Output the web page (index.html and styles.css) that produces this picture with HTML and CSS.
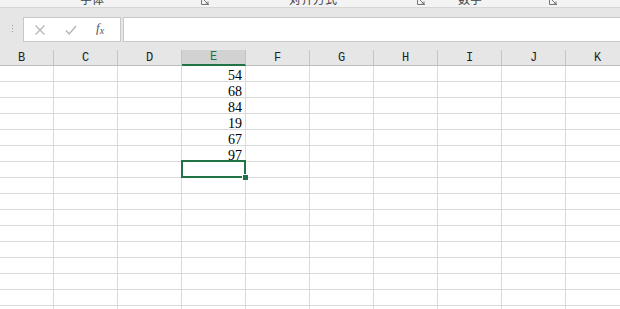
FILE: index.html
```html
<!DOCTYPE html>
<html lang="zh-CN">
<head>
  <meta charset="UTF-8" />
  <title>Sheet</title>
  <link rel="stylesheet" href="styles.css">
</head>
<body>
  <div class="ribbon">
    <div class="group group-font">
      <span class="group-label">字体</span>
      <svg class="launcher" width="8" height="8" viewBox="0 0 8 8"><path d="M0.5 0v7.5h7.5M3 3l4 4M4.5 7H7V4.5" fill="none" stroke="#777" stroke-width="1"/></svg>
    </div>
    <div class="group group-align">
      <span class="group-label">对齐方式</span>
      <svg class="launcher" width="8" height="8" viewBox="0 0 8 8"><path d="M0.5 0v7.5h7.5M3 3l4 4M4.5 7H7V4.5" fill="none" stroke="#777" stroke-width="1"/></svg>
    </div>
    <div class="group group-number">
      <span class="group-label">数字</span>
      <svg class="launcher" width="8" height="8" viewBox="0 0 8 8"><path d="M0.5 0v7.5h7.5M3 3l4 4M4.5 7H7V4.5" fill="none" stroke="#777" stroke-width="1"/></svg>
    </div>
  </div>

  <div class="formula-bar">
    <div class="grip"><i></i><i></i><i></i></div>
    <div class="fx-buttons">
      <svg class="fx-icon" width="12" height="12" viewBox="0 0 12 12"><path d="M1.5 1.5l9 9M10.5 1.5l-9 9" stroke="#b4b4b4" stroke-width="1.2"/></svg>
      <svg class="fx-icon" width="12" height="12" viewBox="0 0 12 12"><path d="M1 6.5l3.2 3.5L11 2" fill="none" stroke="#b4b4b4" stroke-width="1.4"/></svg>
      <span class="fx-label">f<sub>x</sub></span>
    </div>
    <div class="formula-input"></div>
  </div>

  <div class="sheet">
    <div class="col-headers" id="colHeaders"></div>
    <div class="grid" id="grid"></div>
  </div>

  <script>
    const letters = ["B", "C", "D", "E", "F", "G", "H", "I", "J", "K"];
    const values = ["54", "68", "84", "19", "67", "97"];
    const headers = document.getElementById("colHeaders");
    const grid = document.getElementById("grid");

    letters.forEach(letter => {
      const h = document.createElement("div");
      h.className = "col-header" + (letter === "E" ? " active" : "");
      h.textContent = letter;
      headers.appendChild(h);
    });

    for (let row = 0; row < 16; row++) {
      letters.forEach(letter => {
        const cell = document.createElement("div");
        cell.className = "cell";
        if (letter === "E" && row < values.length) {
          cell.textContent = values[row];
        }
        if (letter === "E" && row === values.length) {
          const sel = document.createElement("div");
          sel.className = "selection";
          cell.appendChild(sel);
        }
        grid.appendChild(cell);
      });
    }
  </script>
</body>
</html>
```

FILE: styles.css
```css
body {
  margin: 0;
  width: 620px;
  height: 309px;
  overflow: hidden;
  background: #fff;
  font-family: "Liberation Sans", "Noto Sans CJK SC", sans-serif;
}
.ribbon {
  display: flex;
  height: 7px;
  overflow: hidden;
  background: #f3f3f3;
  border-bottom: 1px solid #d6d6d6;
}
.group {
  display: flex;
  align-items: flex-start;
}
.group-label {
  font-size: 12px;
  line-height: 12px;
  margin-top: -6px;
  color: #444;
}
.launcher {
  margin-top: -3px;
  margin-left: auto;
  margin-right: 3px;
}
.group-font {
  width: 212px;
  padding-left: 80px;
  box-sizing: border-box;
}
.group-align {
  width: 216px;
  padding-left: 77px;
  box-sizing: border-box;
}
.group-number {
  width: 132px;
  padding-left: 30px;
  box-sizing: border-box;
}
.formula-bar {
  display: flex;
  height: 42px;
  padding-top: 9px;
  box-sizing: border-box;
  background: #e6e6e6;
}
.grip {
  width: 23px;
  display: flex;
  flex-direction: column;
  align-items: center;
  gap: 2px;
  padding-top: 8px;
  padding-left: 1px;
  box-sizing: border-box;
}
.grip i {
  width: 1px;
  height: 1px;
  background: #9a9a9a;
}
.fx-buttons {
  width: 98px;
  height: 25px;
  box-sizing: border-box;
  background: #fff;
  border: 1px solid #c8c8c8;
  display: flex;
  align-items: center;
  gap: 19px;
  padding-left: 10px;
}
.fx-label {
  font-family: "Liberation Serif", serif;
  font-style: italic;
  font-size: 13px;
  color: #555;
  margin-top: -3px;
}
.fx-label sub {
  font-size: 10px;
  vertical-align: -2px;
}
.formula-input {
  flex: 1;
  height: 25px;
  margin-left: 2px;
  box-sizing: border-box;
  background: #fff;
  border: 1px solid #c8c8c8;
  border-right: none;
}
.sheet {
  margin-left: -10px;
  background: #e6e6e6;
}
.col-headers,
.grid {
  display: grid;
  grid-template-columns: repeat(10, 64px);
}
.col-header {
  height: 15px;
  border-right: 1px solid #c4c4c4;
  border-bottom: 1px solid #bdbdbd;
  font-family: "Liberation Mono", monospace;
  font-size: 12px;
  line-height: 16px;
  text-align: center;
  color: #222;
}
.col-header.active {
  background: #d2d2d2;
  color: #217346;
  height: 14px;
  line-height: 15px;
  border-bottom: 2px solid #217346;
}
.grid {
  grid-auto-rows: 16px;
  background: #fff;
}
.cell {
  position: relative;
  border-right: 1px solid #dadada;
  border-bottom: 1px solid #dadada;
  font-family: "Liberation Serif", serif;
  font-size: 14px;
  line-height: 17px;
  padding-top: 1px;
  text-align: right;
  padding-right: 3px;
  color: #000;
}
.selection {
  position: absolute;
  z-index: 2;
  top: -2px;
  left: -1px;
  right: -1px;
  bottom: -1px;
  border: 2px solid #217346;
}
.selection::after {
  content: "";
  position: absolute;
  right: -4px;
  bottom: -4px;
  width: 5px;
  height: 5px;
  background: #217346;
  border: 1px solid #fff;
  border-right: none;
  border-bottom: none;
}
```
